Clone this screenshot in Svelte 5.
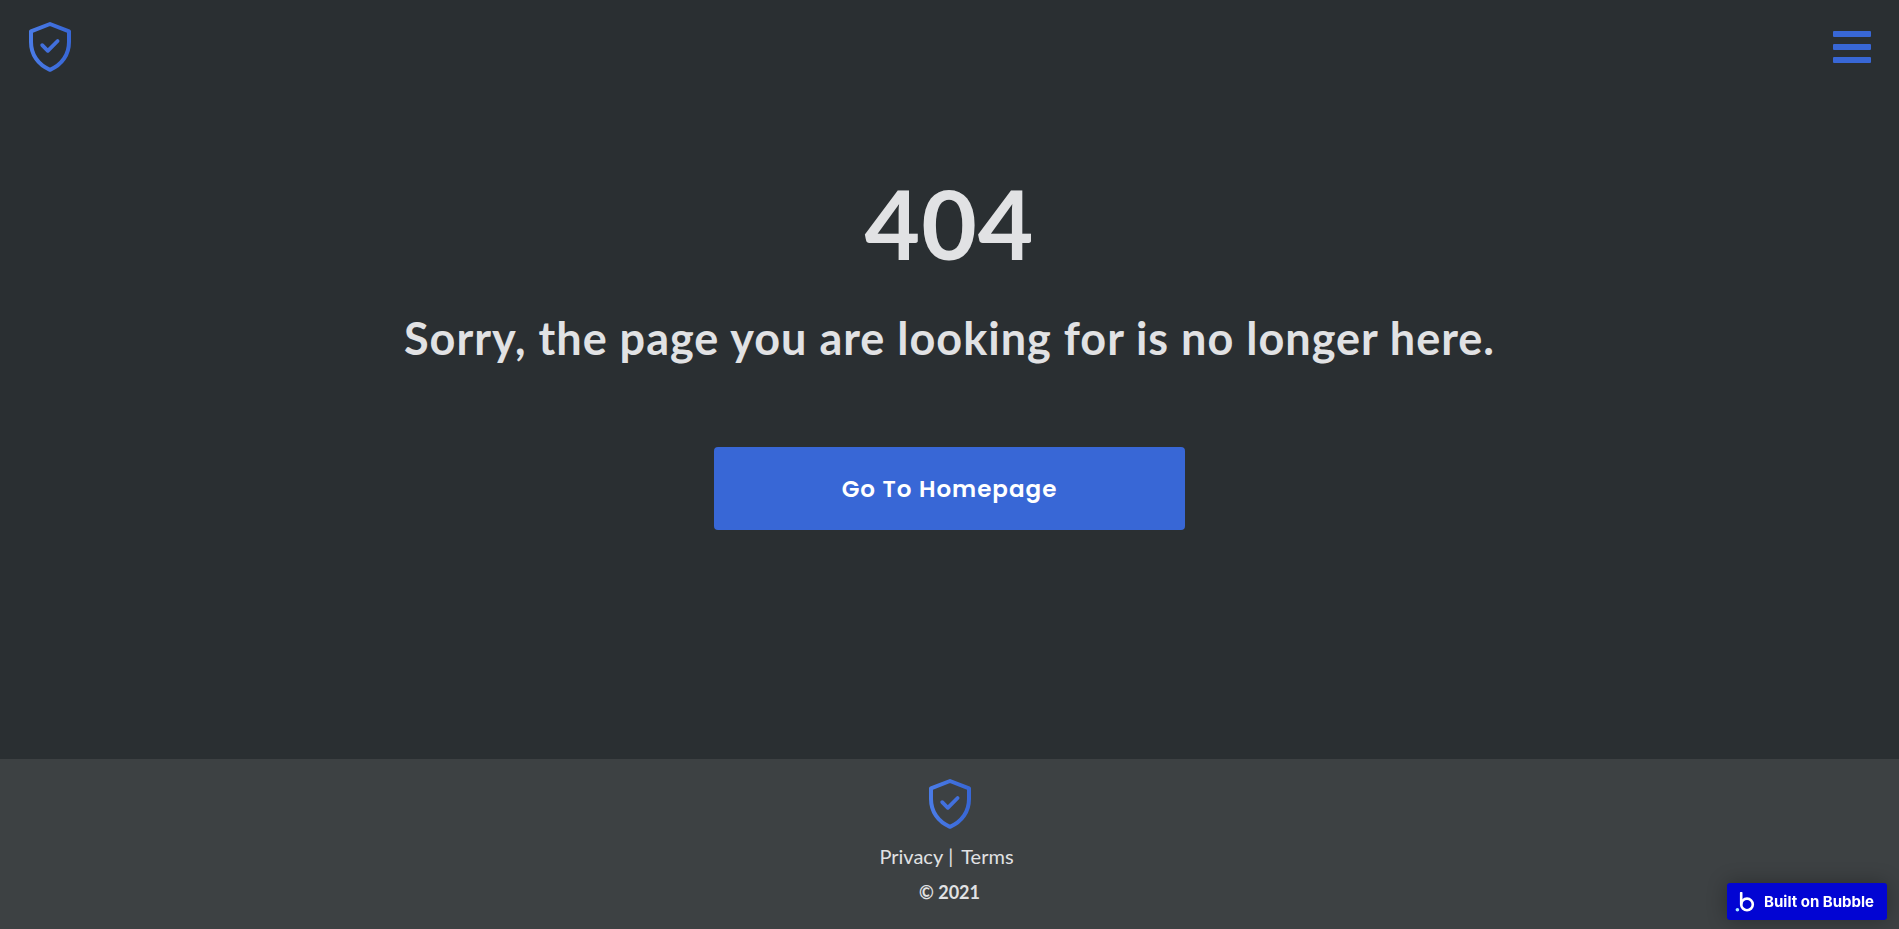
<script lang="ts">
  const year = 2021;

  function goHome() {
    window.location.href = '/';
  }
</script>

<!-- Shared logo, used by the header and the footer -->
{#snippet shield()}
  <svg class="shield" viewBox="0 0 44 52" aria-hidden="true">
    <defs>
      <linearGradient id="shield-blue" x1="0" y1="0" x2="1" y2="0">
        <stop offset="0" stop-color="#4a7be6" />
        <stop offset="1" stop-color="#3867d6" />
      </linearGradient>
    </defs>
    <path
      d="M22 3 L41 10.3 V21 C41 33.5 34 43.8 22 48.8 C10 43.8 3 33.5 3 21 V10.3 Z"
      fill="none"
      stroke="url(#shield-blue)"
      stroke-width="4"
      stroke-linejoin="round"
    />
    <path
      d="M14.2 24.2 L19.8 29.8 L29.6 20"
      fill="none"
      stroke="#4270dd"
      stroke-width="3.8"
      stroke-linecap="round"
      stroke-linejoin="round"
    />
  </svg>
{/snippet}

<div class="page">
  <header class="header">
    <a class="header__logo" href="/" aria-label="Home">{@render shield()}</a>
    <button class="header__menu" type="button" aria-label="Menu">
      <span class="header__bar"></span>
      <span class="header__bar"></span>
      <span class="header__bar"></span>
    </button>
  </header>

  <main class="content">
    <h1 class="content__code">404</h1>
    <p class="content__message">Sorry, the page you are looking for is no longer here.</p>
    <button class="content__button" type="button" on:click={goHome}>Go To Homepage</button>
  </main>

  <footer class="footer">
    <a class="footer__logo" href="/" aria-label="Home">{@render shield()}</a>
    <nav class="footer__links">
      <a href="/privacy">Privacy</a>
      <span class="footer__divider">|</span>
      <a href="/terms">Terms</a>
    </nav>
    <p class="footer__copy">© {year}</p>
  </footer>

  <a class="badge" href="/built-on-bubble">
    <svg class="badge__icon" viewBox="0 0 20 20" aria-hidden="true">
      <path d="M6.2 1 V12" fill="none" stroke="#fff" stroke-width="2.6" stroke-linecap="round" />
      <circle cx="12" cy="12.4" r="5.8" fill="none" stroke="#fff" stroke-width="2.6" />
      <circle cx="2.4" cy="17.8" r="1.8" fill="#a8ecff" />
    </svg>
    Built on Bubble
  </a>
</div>

<style>
  :global(body) {
    margin: 0;
    background: #2a2f32;
  }
  .page {
    display: flex;
    flex-direction: column;
    min-height: 100vh;
    font-family: Lato, sans-serif;
    color: #e1e2e4;
  }
  a {
    color: inherit;
    text-decoration: none;
  }
  .shield {
    display: block;
    width: 44px;
    height: 52px;
  }

  .header {
    display: flex;
    align-items: center;
    justify-content: space-between;
    height: 94px;
    padding: 0 28px;
  }
  .header__menu {
    display: flex;
    flex-direction: column;
    gap: 7px;
    width: 38px;
    padding: 0;
    border: 0;
    background: none;
    cursor: pointer;
  }
  .header__bar {
    height: 6px;
    border-radius: 1px;
    background: #3867d6;
  }

  .content {
    flex: 1;
    display: flex;
    flex-direction: column;
    align-items: center;
    padding: 69px 24px;
    text-align: center;
  }
  .content__code {
    margin: 0;
    font-size: 96px;
    line-height: 120px;
    font-weight: 700;
    letter-spacing: 1px;
  }
  .content__message {
    margin: 23px 0 0;
    font-size: 45px;
    line-height: 64px;
    font-weight: 700;
    letter-spacing: 1px;
  }
  .content__button {
    width: 471px;
    max-width: 100%;
    height: 83px;
    margin: 77px 0 0;
    border: 0;
    border-radius: 4px;
    background: #3867d6;
    color: #fff;
    font-family: Poppins, Inter, sans-serif;
    font-size: 23px;
    font-weight: 600;
    letter-spacing: 1px;
    cursor: pointer;
  }

  .footer {
    display: flex;
    flex-direction: column;
    align-items: center;
    padding: 19px 24px;
    background: #3d4143;
    font-size: 20px;
    line-height: 36px;
  }
  .footer__links {
    display: flex;
    gap: 5px;
    margin-top: 8px;
    padding-right: 6px;
  }
  .footer__divider {
    margin-right: 3px;
  }
  .footer__copy {
    margin: 0;
    font-size: 18px;
    font-weight: 700;
  }

  /* Floats over the page in the bottom right corner */
  .badge {
    position: fixed;
    right: 12px;
    bottom: 9px;
    display: flex;
    align-items: center;
    gap: 9px;
    box-sizing: border-box;
    height: 37px;
    padding: 0 13px 0 8px;
    border-radius: 3px;
    background: #0205d3;
    box-shadow: 0 0 20px rgba(0, 0, 0, 0.3);
    color: #fff;
    font-family: Inter, sans-serif;
    font-size: 15px;
    font-weight: 700;
  }
  .badge__icon {
    width: 20px;
    height: 20px;
  }
</style>
